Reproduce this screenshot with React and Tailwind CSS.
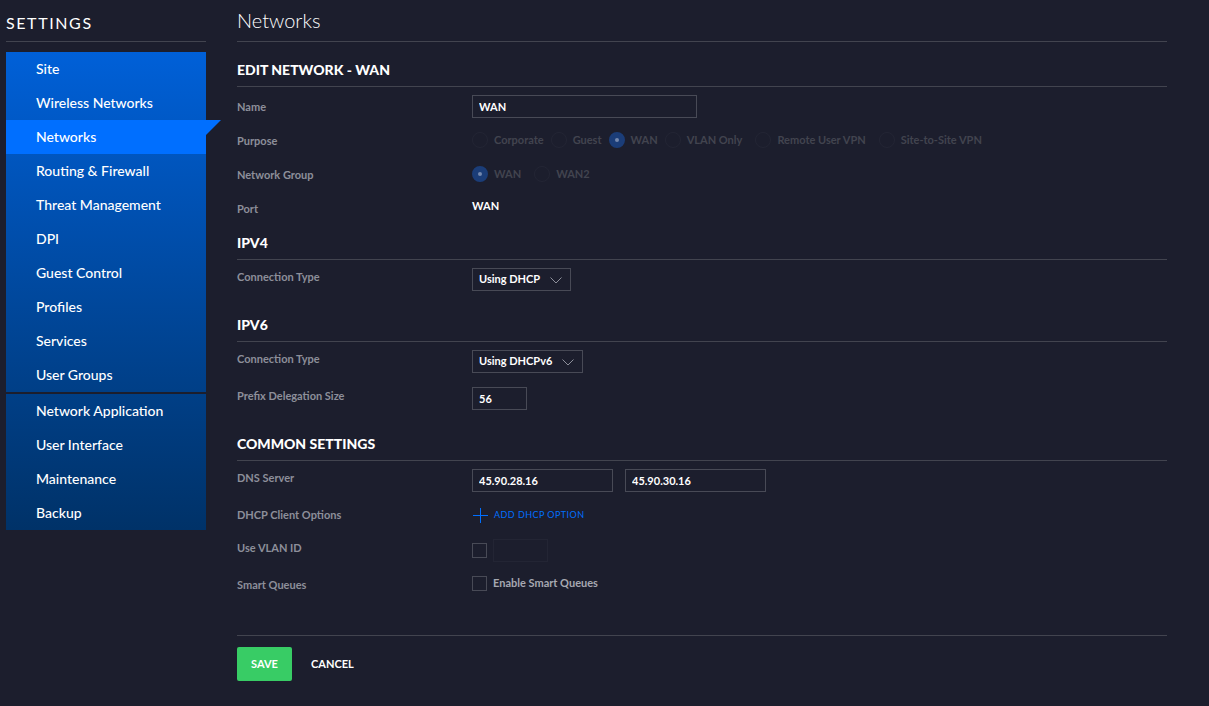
import clsx from "clsx";
import { useState } from "react";

const siteLinks = [
  "Site",
  "Wireless Networks",
  "Networks",
  "Routing & Firewall",
  "Threat Management",
  "DPI",
  "Guest Control",
  "Profiles",
  "Services",
  "User Groups",
];

const appLinks = [
  "Network Application",
  "User Interface",
  "Maintenance",
  "Backup",
];

const purposes = [
  { label: "Corporate" },
  { label: "Guest" },
  { label: "WAN" },
  { label: "VLAN Only" },
  { label: "Remote User VPN", spaced: true },
  { label: "Site-to-Site VPN", spaced: true },
];

const groups = [{ label: "WAN" }, { label: "WAN2", spaced: true }];

const NavItem = ({ label, active, onSelect }) => (
  <li className="relative">
    <a
      href="#"
      onClick={(e) => {
        e.preventDefault();
        onSelect(label);
      }}
      className={clsx(
        "block pl-[30px] text-sm leading-[34px] font-medium text-white",
        active && "bg-[#006fff]"
      )}
    >
      {label}
    </a>
    {active && (
      <span className="absolute top-0 left-full size-[15px] bg-[#006fff] [clip-path:polygon(0_0,100%_0,0_100%)]" />
    )}
  </li>
);

const Sidebar = () => {
  const [active, setActive] = useState("Networks");

  const renderLinks = (links) =>
    links.map((label) => (
      <NavItem
        key={label}
        label={label}
        active={label === active}
        onSelect={setActive}
      />
    ));

  return (
    <aside className="w-[200px] shrink-0">
      <div className="flex h-[42px] items-center border-b border-[#42444f] pt-1 text-base tracking-widest">
        SETTINGS
      </div>
      <nav className="mt-2.5 bg-linear-to-b from-[#0060d8] to-[#003268]">
        <ul>{renderLinks(siteLinks)}</ul>
        <div className="h-0.5 bg-[#1c1e2d]" />
        <ul>{renderLinks(appLinks)}</ul>
      </nav>
    </aside>
  );
};

const SectionTitle = ({ children, className }) => (
  <h2
    className={clsx(
      "mb-2 border-b border-[#42444f] pb-1.5 text-sm leading-5 font-black",
      className
    )}
  >
    {children}
  </h2>
);

const Row = ({ label, htmlFor, tall, className, children }) => (
  <div className={clsx("flex items-start", className)}>
    <label
      htmlFor={htmlFor}
      className={clsx(
        "w-[235px] shrink-0 text-[#8d8f9a]",
        tall ? "leading-6" : "leading-[18px]"
      )}
    >
      {label}
    </label>
    {children}
  </div>
);

const TextInput = ({ className, ...props }) => (
  <input
    type="text"
    className={clsx(
      "h-[23px] border border-[#484a56] bg-transparent px-1.5 font-bold text-white outline-none disabled:border-[#232534]",
      className
    )}
    {...props}
  />
);

const Select = ({ id, options, className }) => (
  <div className={clsx("relative h-[23px]", className)}>
    <select
      id={id}
      className="h-full w-full appearance-none border border-[#484a56] bg-transparent pl-1.5 font-bold text-white outline-none"
    >
      {options.map((option) => (
        <option key={option} className="bg-[#1c1e2d]">
          {option}
        </option>
      ))}
    </select>
    <svg
      viewBox="0 0 12 7"
      className="pointer-events-none absolute top-[9px] right-[9px] h-[7px] w-3 fill-none stroke-[#8d8f9a]"
    >
      <path d="M.5 .5 6 6 11.5 .5" />
    </svg>
  </div>
);

const RadioGroup = ({ name, options, value, label: groupLabel }) => (
  <div role="radiogroup" aria-label={groupLabel} className="flex gap-[7px]">
    {options.map(({ label, spaced }) => (
      <label
        key={label}
        className={clsx(
          "flex h-[22px] items-center gap-1.5 font-bold text-[#42444f]",
          spaced && "ml-1.5"
        )}
      >
        <input
          type="radio"
          name={name}
          disabled
          defaultChecked={label === value}
          className="size-4 appearance-none rounded-full border border-[#232534] checked:border-[6px] checked:border-[#1b3d78] checked:bg-[#7488ae]"
        />
        {label}
      </label>
    ))}
  </div>
);

const Checkbox = ({ id }) => (
  <input
    id={id}
    type="checkbox"
    className="size-[15px] appearance-none border border-[#484a56] checked:bg-[#006fff]"
  />
);

const NetworkForm = () => (
  <form onSubmit={(e) => e.preventDefault()} className="text-[11px] font-bold">
    <SectionTitle className="mt-[18px]">EDIT NETWORK - WAN</SectionTitle>
    <Row label="Name" htmlFor="name" tall className="h-[34px]">
      <TextInput id="name" defaultValue="WAN" className="w-[225px]" />
    </Row>
    <Row label="Purpose" tall className="h-[34px]">
      <RadioGroup
        name="purpose"
        label="Purpose"
        options={purposes}
        value="WAN"
      />
    </Row>
    <Row label="Network Group" tall className="h-[34px]">
      <RadioGroup
        name="group"
        label="Network Group"
        options={groups}
        value="WAN"
      />
    </Row>
    <Row label="Port" tall>
      <span className="leading-[18px]">WAN</span>
    </Row>

    <SectionTitle className="mt-3">IPV4</SectionTitle>
    <Row label="Connection Type" htmlFor="ipv4">
      <Select
        id="ipv4"
        options={["Using DHCP", "Static IP", "PPPoE"]}
        className="w-[99px]"
      />
    </Row>

    <SectionTitle className="mt-6">IPV6</SectionTitle>
    <Row label="Connection Type" htmlFor="ipv6" className="mb-3.5">
      <Select
        id="ipv6"
        options={["Using DHCPv6", "Static IP", "Disabled"]}
        className="w-[111px]"
      />
    </Row>
    <Row label="Prefix Delegation Size" htmlFor="prefix">
      <TextInput id="prefix" defaultValue="56" className="w-[55px]" />
    </Row>

    <SectionTitle className="mt-6">COMMON SETTINGS</SectionTitle>
    <Row label="DNS Server" htmlFor="dns1" className="mb-3.5">
      <div className="flex gap-3">
        <TextInput
          id="dns1"
          defaultValue="45.90.28.16"
          className="w-[141px]"
        />
        <TextInput
          aria-label="Secondary DNS Server"
          defaultValue="45.90.30.16"
          className="w-[141px]"
        />
      </div>
    </Row>
    <Row label="DHCP Client Options" htmlFor="add-option" className="mb-[15px]">
      <button
        id="add-option"
        type="button"
        className="flex h-[18px] items-center gap-1.5 text-[9px] font-normal tracking-wider text-[#006fff]"
      >
        <svg viewBox="0 0 16 16" className="size-4 fill-none stroke-current">
          <path d="M8.5 1v15M1 8.5h15" />
        </svg>
        ADD DHCP OPTION
      </button>
    </Row>
    <Row label="Use VLAN ID" htmlFor="vlan" className="mb-3.5">
      <div className="flex items-center gap-1.5">
        <Checkbox id="vlan" />
        <TextInput aria-label="VLAN ID" disabled className="w-[55px]" />
      </div>
    </Row>
    <Row label="Smart Queues" htmlFor="queues">
      <label className="flex h-[15px] items-center gap-1.5 text-[#a6a8b1]">
        <Checkbox id="queues" />
        Enable Smart Queues
      </label>
    </Row>

    <div className="mt-[41px] flex border-t border-[#42444f] pt-[11px]">
      <button
        type="submit"
        className="h-[34px] w-[55px] rounded-xs bg-[#38cc65] text-white"
      >
        SAVE
      </button>
      <button type="button" className="h-[34px] px-[19px] text-white">
        CANCEL
      </button>
    </div>
  </form>
);

const App = () => (
  <div className="flex min-h-screen gap-[31px] bg-[#1c1e2d] pr-[42px] pb-6 pl-1.5 font-[Lato,sans-serif] text-white">
    <Sidebar />
    <main className="min-w-0 flex-1">
      <h1 className="h-[42px] border-b border-[#42444f] text-xl leading-10 font-light">
        Networks
      </h1>
      <NetworkForm />
    </main>
  </div>
);

export default App;
